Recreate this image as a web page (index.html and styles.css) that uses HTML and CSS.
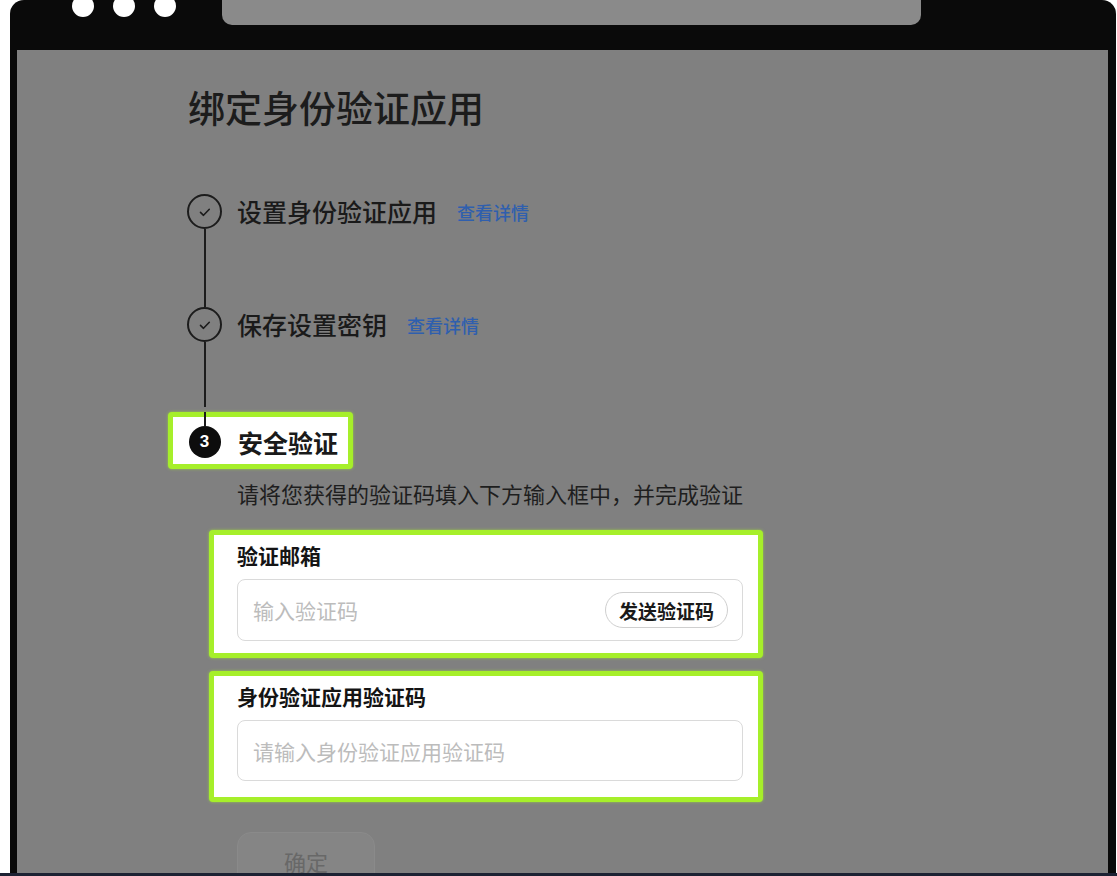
FILE: index.html
```html
<!DOCTYPE html>
<html lang="zh-CN">
<head>
    <meta charset="UTF-8">
    <meta name="viewport" content="width=device-width, initial-scale=1.0">
    <title>绑定身份验证应用</title>
    <link rel="stylesheet" href="styles.css">
</head>
<body>
    <div class="device">
        <div class="toolbar">
            <div class="lights">
                <span class="light"></span>
                <span class="light"></span>
                <span class="light"></span>
            </div>
            <div class="address"></div>
        </div>

        <div class="screen">
            <h1 class="title">绑定身份验证应用</h1>

            <ol class="steps">
                <li class="step step-first">
                    <div class="rail">
                        <span class="marker marker-done">
                            <svg viewBox="0 0 16 16" width="16" height="16"><path d="M3.5 8.4l3 2.9 5.8-6" fill="none" stroke="#1c1c1c" stroke-width="1.6" stroke-linecap="round" stroke-linejoin="round"/></svg>
                        </span>
                        <span class="line"></span>
                    </div>
                    <div class="step-head">
                        <span class="step-name">设置身份验证应用</span>
                        <a class="detail" href="#">查看详情</a>
                    </div>
                </li>

                <li class="step step-second">
                    <div class="rail">
                        <span class="marker marker-done">
                            <svg viewBox="0 0 16 16" width="16" height="16"><path d="M3.5 8.4l3 2.9 5.8-6" fill="none" stroke="#1c1c1c" stroke-width="1.6" stroke-linecap="round" stroke-linejoin="round"/></svg>
                        </span>
                        <span class="line"></span>
                    </div>
                    <div class="step-head">
                        <span class="step-name">保存设置密钥</span>
                        <a class="detail" href="#">查看详情</a>
                    </div>
                </li>

                <li class="step-current">
                    <div class="focus focus-step">
                        <div class="rail rail-inline">
                            <span class="stub"></span>
                            <span class="marker marker-active">3</span>
                        </div>
                        <span class="step-name">安全验证</span>
                    </div>

                    <p class="desc">请将您获得的验证码填入下方输入框中，并完成验证</p>

                    <div class="focus field">
                        <label class="field-label">验证邮箱</label>
                        <div class="input-box">
                            <input type="text" placeholder="输入验证码">
                            <button class="send" type="button">发送验证码</button>
                        </div>
                    </div>

                    <div class="focus field field-app">
                        <label class="field-label">身份验证应用验证码</label>
                        <div class="input-box">
                            <input type="text" placeholder="请输入身份验证应用验证码">
                        </div>
                    </div>

                    <button class="confirm" type="button">确定</button>
                </li>
            </ol>
        </div>
    </div>
    <div class="taskbar"></div>
</body>
</html>
```

FILE: styles.css
```css
body {
    margin: 0;
    height: 876px;
    overflow: hidden;
    background-color: #fff;
    font-family: "Noto Sans CJK SC", "Noto Sans", sans-serif;
    color: #1c1c1c;
}
.device {
    margin-left: 10px;
    width: 1106px;
    height: 873px;
    box-sizing: border-box;
    padding: 0 8px 0 7px;
    background-color: #0a0a0a;
    border-radius: 14px 14px 0 0;
    display: flex;
    flex-direction: column;
    overflow: hidden;
}
.toolbar {
    height: 50px;
    flex-shrink: 0;
    display: flex;
    align-items: flex-start;
}
.lights {
    display: flex;
    gap: 19px;
    margin: -5px 0 0 55px;
}
.light {
    width: 22px;
    height: 22px;
    border-radius: 50%;
    background-color: #fff;
}
.address {
    margin-left: 46px;
    width: 699px;
    height: 25px;
    background-color: #8a8a8a;
    border-radius: 0 0 10px 10px;
}
.screen {
    flex: 1;
    background-color: #808080;
    padding-left: 170px;
    overflow: hidden;
}
.title {
    margin: 31px 0 0 1px;
    font-size: 37px;
    line-height: 52px;
    font-weight: 500;
    color: #1c1c1c;
}
.steps {
    list-style: none;
    margin: 61px 0 0;
    padding: 0;
}
.step {
    display: flex;
}
.step-first {
    height: 113px;
}
.step-second {
    height: 100px;
}
.rail {
    width: 35px;
    display: flex;
    flex-direction: column;
    align-items: center;
}
.marker {
    flex-shrink: 0;
    box-sizing: border-box;
    display: flex;
    align-items: center;
    justify-content: center;
    border-radius: 50%;
}
.marker-done {
    width: 35px;
    height: 35px;
    border: 2px solid #1c1c1c;
}
.marker-active {
    width: 32px;
    height: 32px;
    background-color: #0d0d0d;
    color: #fff;
    font-family: "Liberation Sans", Arial, sans-serif;
    font-size: 17px;
    font-weight: 700;
}
.line {
    flex: 1;
    width: 2px;
    background-color: #1c1c1c;
}
.step-head {
    height: 35px;
    display: flex;
    align-items: center;
    margin-left: 15px;
}
.step-name {
    font-size: 25px;
    font-weight: 500;
    line-height: 35px;
    color: #1a1a1a;
}
.detail {
    margin-left: 20px;
    font-size: 18px;
    font-weight: 500;
    color: #2f5fae;
    text-decoration: none;
}
.focus {
    box-sizing: border-box;
    background-color: #fff;
    border: 5px solid #a6ef2a;
    border-radius: 4px;
    box-shadow: 0 0 3px rgba(166, 239, 42, 0.7);
}
.focus-step {
    display: inline-flex;
    align-items: flex-start;
    margin-left: -19px;
    padding: 0 10px 6px 14px;
}
.rail-inline {
    width: 35px;
}
.stub {
    width: 2px;
    height: 14px;
    margin-top: -5px;
    background-color: #1c1c1c;
}
.focus-step .step-name {
    margin: 9px 0 0 16px;
    line-height: 32px;
    font-weight: 700;
}
.desc {
    margin: 9px 0 0 50px;
    font-size: 22px;
    line-height: 30px;
    color: #1e1e1e;
}
.field {
    width: 554px;
    margin: 22px 0 0 22px;
    padding: 6px 15px 12px 23px;
}
.field-app {
    margin-top: 13px;
    padding-bottom: 16px;
}
.field-label {
    display: block;
    font-size: 21px;
    font-weight: 700;
    line-height: 28px;
    margin-bottom: 10px;
    color: #141414;
}
.input-box {
    box-sizing: border-box;
    height: 62px;
    display: flex;
    align-items: center;
    padding: 0 14px 0 15px;
    border: 1px solid #dadada;
    border-radius: 8px;
}
.field-app .input-box {
    height: 61px;
}
.input-box input {
    flex: 1;
    min-width: 0;
    border: none;
    outline: none;
    padding: 0;
    background: transparent;
    font-family: inherit;
    font-size: 21px;
    color: #1c1c1c;
}
.input-box input::placeholder {
    color: #bcbcbc;
}
.send {
    height: 36px;
    padding: 0 13px;
    border: 1px solid #cfcfcf;
    border-radius: 18px;
    background-color: #fff;
    font-family: inherit;
    font-size: 19px;
    font-weight: 700;
    color: #1a1a1a;
}
.confirm {
    display: block;
    margin: 30px 0 0 50px;
    width: 138px;
    height: 58px;
    border: 1px solid #8a8a8a;
    border-radius: 14px;
    background-color: #858585;
    font-family: inherit;
    font-size: 22px;
    line-height: 30px;
    color: #686868;
}
.taskbar {
    height: 3px;
    background-color: #1c2233;
}
```
